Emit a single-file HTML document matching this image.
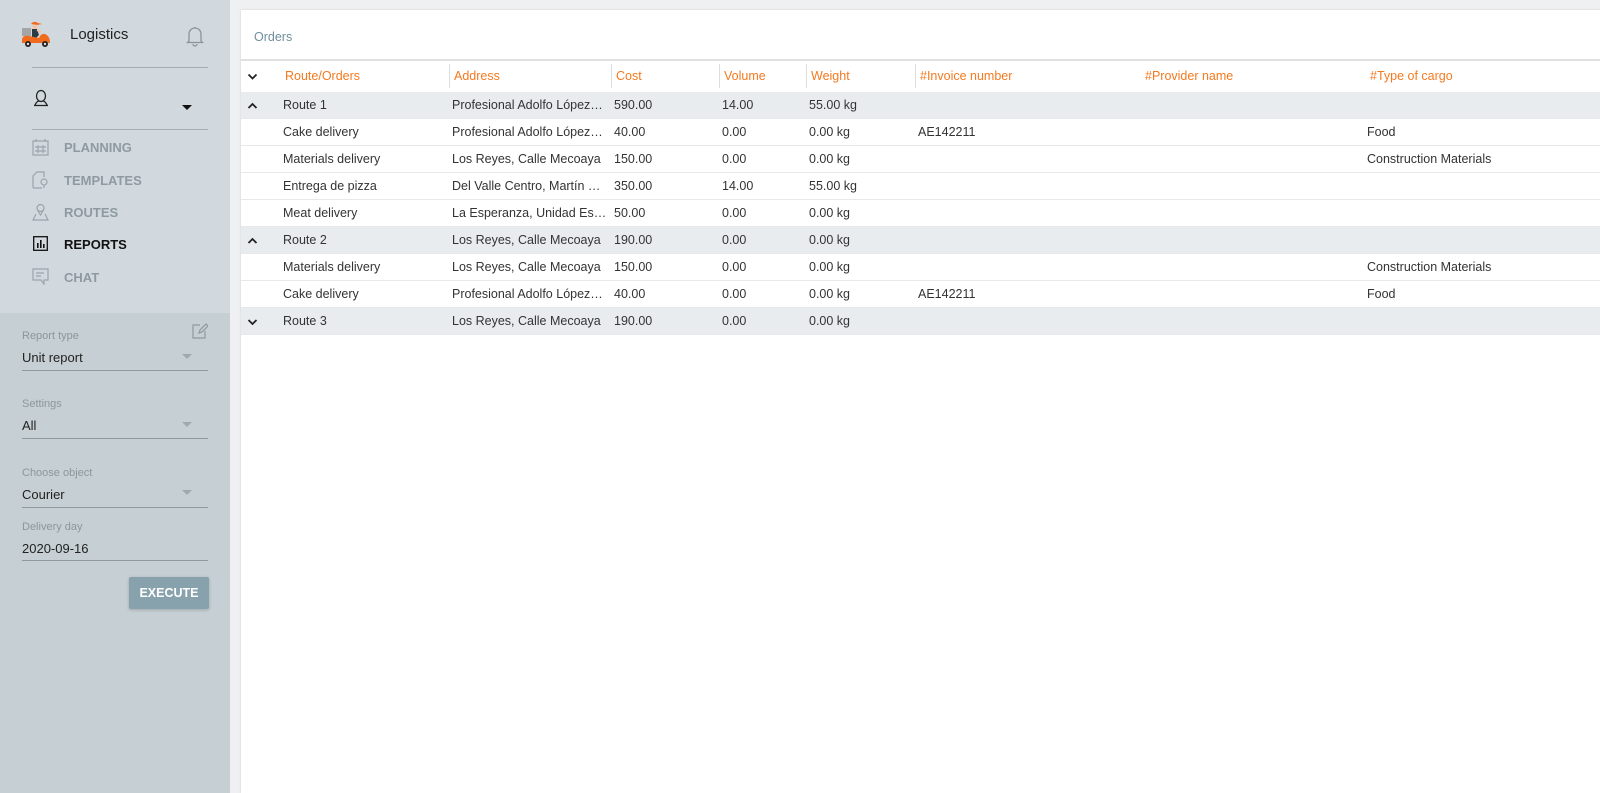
<!DOCTYPE html>
<html><head><meta charset="utf-8"><style>
*{box-sizing:border-box;margin:0;padding:0}
body{width:1600px;height:793px;overflow:hidden;font-family:"Liberation Sans",sans-serif;background:#eef0f2;position:relative}
.side{position:absolute;left:0;top:0;width:230px;height:793px;background:#c6cfd3}
.top{position:absolute;left:0;top:0;width:230px;height:313px;background:#d1d9de}
.t{position:absolute;white-space:nowrap}
.nav{position:absolute;left:64px;font-size:13px;font-weight:bold;color:#8e9a9f}
.hr{position:absolute;left:32px;width:176px;height:1px;background:#a3adb2}
.lbl{position:absolute;left:22px;font-size:11px;color:#8c979c}
.val{position:absolute;left:22px;font-size:13px;color:#222}
.ul{position:absolute;left:22px;width:186px;height:1px;background:#8f9a9f}
.dd{position:absolute;left:182px;width:0;height:0;border-left:5px solid transparent;border-right:5px solid transparent;border-top:5px solid #a0a9ae}
.card{position:absolute;left:241px;top:10px;width:1359px;height:783px;background:#fff;box-shadow:0 0 2px rgba(0,0,0,.15)}
.row{position:absolute;left:241px;width:1359px;height:27px;border-bottom:1px solid #e6e9ec;font-size:12.5px;color:#333}
.row.g{background:#e9ecef}
.row span{position:absolute;top:6px;white-space:nowrap}
.h{position:absolute;top:69px;font-size:12.5px;color:#f47a20}
.sep{position:absolute;top:64px;width:1px;height:24px;background:#ddd}
</style></head><body>
<div class="side"></div><div class="top"></div>
<svg class="t" style="left:20px;top:20px" width="32" height="30" viewBox="0 0 32 30">
<rect x="2" y="8" width="9" height="8" fill="#a5a5a5"/>
<path d="M11 4 Q14 0 18 3 L22 4 L17 5Z" fill="#f26b1d"/>
<circle cx="15" cy="7" r="2.5" fill="#f3c5a8"/>
<path d="M12 9 H17 L19 15 L16 18 H12Z" fill="#2d3b45"/>
<path d="M17 10 L21 12" stroke="#f3c5a8" stroke-width="2"/>
<path d="M2 19 Q3 15 9 16 L19 18 Q21 13 25 14 Q30 16 30 23 L2 23Z" fill="#f26b1d"/>
<circle cx="8" cy="24" r="3" fill="#222"/><circle cx="25" cy="24" r="3" fill="#222"/>
<circle cx="8" cy="24" r="1.2" fill="#ddd"/><circle cx="25" cy="24" r="1.2" fill="#ddd"/>
</svg>
<div class="t" style="left:70px;top:26px;font-size:15px;color:#222">Logistics</div>
<svg class="t" style="left:186px;top:25px" width="18" height="22" viewBox="0 0 18 22" fill="none" stroke="#8a959a" stroke-width="1.3"><path d="M3 16 V9 a6 6 0 0 1 12 0 V16 L16.5 17.5 H1.5Z"/><path d="M7 19 a2 2 0 0 0 4 0"/><path d="M9 2 V3"/></svg>
<div class="hr" style="top:67px"></div>
<svg class="t" style="left:33px;top:89px" width="16" height="18" viewBox="0 0 16 18" fill="none" stroke="#222" stroke-width="1.3"><ellipse cx="8" cy="7" rx="4.5" ry="5.5"/><path d="M2 16 Q4 12 6 12 M14 16 Q12 12 10 12 M1 16.5 H15"/></svg>
<div class="t" style="left:182px;top:105px;border-left:5px solid transparent;border-right:5px solid transparent;border-top:5px solid #111;width:0;height:0"></div>
<div class="hr" style="top:129px"></div>
<svg class="t" style="left:32px;top:138px" width="17" height="18" viewBox="0 0 17 18" fill="none" stroke="#9aa5aa" stroke-width="1.2"><rect x="1" y="3" width="15" height="14"/><path d="M4 1V4M13 1V4M6 7V15M11 7V15M3 9H14M3 13H14"/></svg>
<div class="nav" style="top:140px">PLANNING</div>
<svg class="t" style="left:32px;top:171px" width="17" height="18" viewBox="0 0 17 18" fill="none" stroke="#9aa5aa" stroke-width="1.2"><path d="M1 17V5L5 1H12V6M1 17H10"/><circle cx="12" cy="11" r="3"/><path d="M12 14V17"/></svg>
<div class="nav" style="top:173px">TEMPLATES</div>
<svg class="t" style="left:32px;top:203px" width="17" height="18" viewBox="0 0 17 18" fill="none" stroke="#9aa5aa" stroke-width="1.2"><circle cx="8.5" cy="5" r="3.5"/><path d="M5.5 7 L8.5 12 L11.5 7M4 11 L1 17 H16 L13 11"/></svg>
<div class="nav" style="top:205px">ROUTES</div>
<svg class="t" style="left:33px;top:236px" width="15" height="15" viewBox="0 0 15 15"><rect x="0.7" y="0.7" width="13.6" height="13.6" fill="none" stroke="#111" stroke-width="1.3"/><rect x="4" y="7" width="1.6" height="5" fill="#111"/><rect x="7" y="4" width="1.6" height="8" fill="#111"/><rect x="10" y="8" width="1.6" height="4" fill="#111"/></svg>
<div class="nav" style="top:237px;color:#111">REPORTS</div>
<svg class="t" style="left:32px;top:268px" width="17" height="17" viewBox="0 0 17 17" fill="none" stroke="#9aa5aa" stroke-width="1.2"><path d="M1 1H16V12H12V16L9 12H1Z"/><path d="M4 5H12M4 8H9"/></svg>
<div class="nav" style="top:270px">CHAT</div>
<svg class="t" style="left:192px;top:322px" width="16" height="17" viewBox="0 0 16 17" fill="none" stroke="#8f9a9f" stroke-width="1.2"><path d="M8 3H1V16H13V9"/><path d="M7 11L8 8L14 2L16 4L10 10Z"/></svg>
<div class="lbl" style="top:330px">Report type</div><div class="val" style="top:350px">Unit report</div><div class="dd" style="top:354px"></div><div class="ul" style="top:370px"></div>
<div class="lbl" style="top:398px">Settings</div><div class="val" style="top:418px">All</div><div class="dd" style="top:422px"></div><div class="ul" style="top:438px"></div>
<div class="lbl" style="top:467px">Choose object</div><div class="val" style="top:487px">Courier</div><div class="dd" style="top:490px"></div><div class="ul" style="top:507px"></div>
<div class="lbl" style="top:521px">Delivery day</div><div class="val" style="top:541px">2020-09-16</div><div class="ul" style="top:560px"></div>
<div class="t" style="left:129px;top:577px;width:80px;height:32px;background:#87a1ad;border-radius:2px;box-shadow:0 1px 3px rgba(0,0,0,.2);color:#fff;font-size:12.5px;font-weight:bold;text-align:center;line-height:32px">EXECUTE</div>

<div class="card"></div>
<div class="t" style="left:254px;top:30px;font-size:12.5px;color:#6f8f9f">Orders</div>
<div class="t" style="left:241px;top:59px;width:1359px;height:2px;background:#e0e0e0"></div>
<svg class="t" style="left:247px;top:73px" width="11" height="8" viewBox="0 0 11 8" fill="none" stroke="#222" stroke-width="1.8"><path d="M1.5 1.5L5.5 5.5L9.5 1.5"/></svg>
<div class="h" style="left:285px">Route/Orders</div><div class="sep" style="left:449px"></div>
<div class="h" style="left:454px">Address</div><div class="sep" style="left:611px"></div>
<div class="h" style="left:616px">Cost</div><div class="sep" style="left:719px"></div>
<div class="h" style="left:724px">Volume</div><div class="sep" style="left:806px"></div>
<div class="h" style="left:811px">Weight</div><div class="sep" style="left:915px"></div>
<div class="h" style="left:920px">#Invoice number</div>
<div class="h" style="left:1145px">#Provider name</div>
<div class="h" style="left:1370px">#Type of cargo</div>

<div class="row g" style="top:92px"><svg style="position:absolute;left:6px;top:10px" width="11" height="8" viewBox="0 0 11 8" fill="none" stroke="#222" stroke-width="1.8"><path d="M1.5 6L5.5 2L9.5 6"/></svg><span style="left:42px">Route 1</span><span style="left:211px">Profesional Adolfo López…</span><span style="left:373px">590.00</span><span style="left:481px">14.00</span><span style="left:568px">55.00 kg</span></div>
<div class="row" style="top:119px"><span style="left:42px">Cake delivery</span><span style="left:211px">Profesional Adolfo López…</span><span style="left:373px">40.00</span><span style="left:481px">0.00</span><span style="left:568px">0.00 kg</span><span style="left:677px">AE142211</span><span style="left:1126px">Food</span></div>
<div class="row" style="top:146px"><span style="left:42px">Materials delivery</span><span style="left:211px">Los Reyes, Calle Mecoaya</span><span style="left:373px">150.00</span><span style="left:481px">0.00</span><span style="left:568px">0.00 kg</span><span style="left:1126px">Construction Materials</span></div>
<div class="row" style="top:173px"><span style="left:42px">Entrega de pizza</span><span style="left:211px">Del Valle Centro, Martín …</span><span style="left:373px">350.00</span><span style="left:481px">14.00</span><span style="left:568px">55.00 kg</span></div>
<div class="row" style="top:200px"><span style="left:42px">Meat delivery</span><span style="left:211px">La Esperanza, Unidad Es…</span><span style="left:373px">50.00</span><span style="left:481px">0.00</span><span style="left:568px">0.00 kg</span></div>
<div class="row g" style="top:227px"><svg style="position:absolute;left:6px;top:10px" width="11" height="8" viewBox="0 0 11 8" fill="none" stroke="#222" stroke-width="1.8"><path d="M1.5 6L5.5 2L9.5 6"/></svg><span style="left:42px">Route 2</span><span style="left:211px">Los Reyes, Calle Mecoaya</span><span style="left:373px">190.00</span><span style="left:481px">0.00</span><span style="left:568px">0.00 kg</span></div>
<div class="row" style="top:254px"><span style="left:42px">Materials delivery</span><span style="left:211px">Los Reyes, Calle Mecoaya</span><span style="left:373px">150.00</span><span style="left:481px">0.00</span><span style="left:568px">0.00 kg</span><span style="left:1126px">Construction Materials</span></div>
<div class="row" style="top:281px"><span style="left:42px">Cake delivery</span><span style="left:211px">Profesional Adolfo López…</span><span style="left:373px">40.00</span><span style="left:481px">0.00</span><span style="left:568px">0.00 kg</span><span style="left:677px">AE142211</span><span style="left:1126px">Food</span></div>
<div class="row g" style="top:308px"><svg style="position:absolute;left:6px;top:10px" width="11" height="8" viewBox="0 0 11 8" fill="none" stroke="#222" stroke-width="1.8"><path d="M1.5 2L5.5 6L9.5 2"/></svg><span style="left:42px">Route 3</span><span style="left:211px">Los Reyes, Calle Mecoaya</span><span style="left:373px">190.00</span><span style="left:481px">0.00</span><span style="left:568px">0.00 kg</span></div>
</body></html>
